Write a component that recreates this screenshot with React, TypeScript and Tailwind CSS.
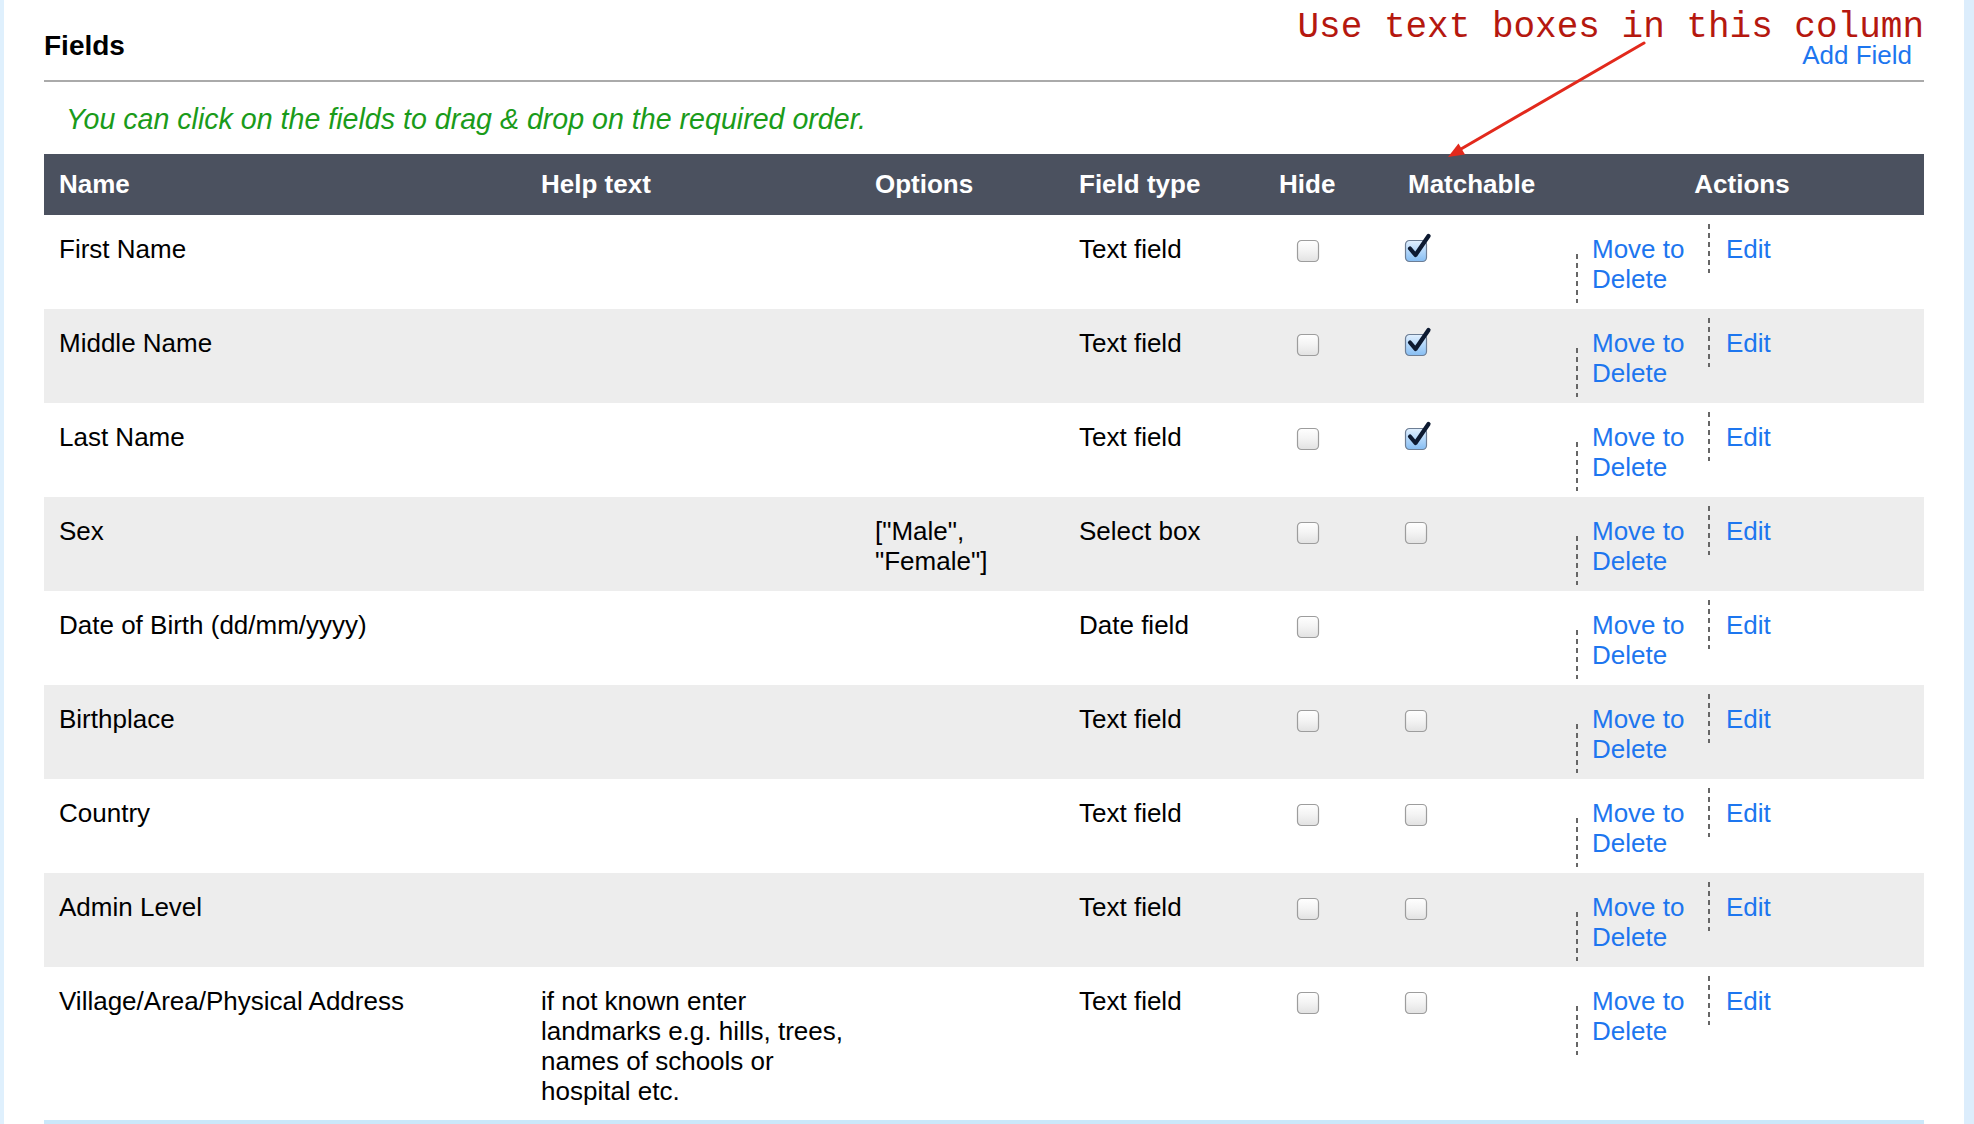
import React from "react";

type Row = {
  name: string;
  help?: string;
  options?: string;
  type: string;
  m: boolean | null;
};

const rows: Row[] = [
  { name: "First Name", type: "Text field", m: true },
  { name: "Middle Name", type: "Text field", m: true },
  { name: "Last Name", type: "Text field", m: true },
  { name: "Sex", options: '["Male", "Female"]', type: "Select box", m: false },
  { name: "Date of Birth (dd/mm/yyyy)", type: "Date field", m: null },
  { name: "Birthplace", type: "Text field", m: false },
  { name: "Country", type: "Text field", m: false },
  { name: "Admin Level", type: "Text field", m: false },
  {
    name: "Village/Area/Physical Address",
    help: "if not known enter landmarks e.g. hills, trees, names of schools or hospital etc.",
    type: "Text field",
    m: false,
  },
];

function Box({ checked }: { checked: boolean }) {
  return (
    <svg width="30" height="28" viewBox="0 -6 30 28" className="block overflow-visible">
      <rect
        x="0.5"
        y="0.5"
        width="21"
        height="21"
        rx="4"
        fill={checked ? "url(#gC)" : "url(#gU)"}
        stroke={checked ? "#6d7e95" : "#9d9d9d"}
        strokeWidth="1.2"
      />
      {checked && (
        <path
          d="M5 8.5 L10.5 15 L23.5 -4"
          fill="none"
          stroke="#0d1a31"
          strokeWidth="4.2"
          strokeLinecap="round"
          strokeLinejoin="round"
        />
      )}
    </svg>
  );
}

function Dash({ className }: { className: string }) {
  return (
    <span
      className={
        "block w-[2px] shrink-0 bg-[repeating-linear-gradient(to_bottom,#666666_0px,#666666_5px,transparent_5px,transparent_9px)] " +
        className
      }
    />
  );
}

export default function App() {
  return (
    <div className="relative w-[1974px] h-[1124px] overflow-hidden bg-white flex font-['Liberation_Sans',Arial,Helvetica,sans-serif] text-black">
      <svg width="0" height="0" className="absolute">
        <defs>
          <linearGradient id="gU" x1="0" y1="0" x2="0" y2="1">
            <stop offset="0" stopColor="#ffffff" />
            <stop offset="0.5" stopColor="#f3f3f3" />
            <stop offset="1" stopColor="#e2e2e2" />
          </linearGradient>
          <linearGradient id="gC" x1="0" y1="0" x2="0" y2="1">
            <stop offset="0" stopColor="#e2f0fe" />
            <stop offset="0.5" stopColor="#b3d7fa" />
            <stop offset="1" stopColor="#86bdf2" />
          </linearGradient>
        </defs>
      </svg>

      <div className="w-[4px] h-full bg-[#dff0fd] shrink-0" />

      <div className="ml-[40px] w-[1880px] shrink-0 flex flex-col">
        {/* Header */}
        <div className="h-[82px] border-b-2 border-[#aaaaaa] flex justify-between items-start">
          <div className="pt-[30px] text-[28px] leading-[32px] font-bold">Fields</div>
          <div className="flex flex-col items-end">
            <div className="pt-[14px] font-['Liberation_Mono','Courier_New',monospace] text-[36px] leading-[27px] text-[#b5180f] whitespace-nowrap">
              Use text boxes in this column
            </div>
            <a className="mr-[12px] mt-[1px] text-[26px] leading-[26px] text-[#1d76ef]">Add Field</a>
          </div>
        </div>

        <p className="pl-[22px] pt-[21px] pb-[19px] text-[28.6px] leading-[32px] italic text-[#1a9b1a]">
          You can click on the fields to drag &amp; drop on the required order.
        </p>

        {/* Table header */}
        <div className="grid grid-cols-[482px_334px_204px_200px_129px_167px_364px] h-[61px] pt-[15px] bg-[#4b515f] text-white font-bold text-[26px] leading-[30px]">
          <div className="pl-[15px]">Name</div>
          <div className="pl-[15px]">Help text</div>
          <div className="pl-[15px]">Options</div>
          <div className="pl-[15px]">Field type</div>
          <div className="pl-[15px]">Hide</div>
          <div className="pl-[15px]">Matchable</div>
          <div className="text-center">Actions</div>
        </div>

        {/* Rows */}
        {rows.map((r, i) => (
          <div
            key={r.name}
            className={
              "grid grid-cols-[482px_334px_204px_200px_129px_167px_364px] pt-[19px] text-[26px] leading-[30px] " +
              (i === rows.length - 1 ? "h-[153px] " : "h-[94px] ") +
              (i % 2 === 1 ? "bg-[#ededed]" : "bg-white")
            }
          >
            <div className="pl-[15px]">{r.name}</div>
            <div className="pl-[15px]">{r.help}</div>
            <div className="pl-[15px]">{r.options}</div>
            <div className="pl-[15px]">{r.type}</div>
            <div className="pl-[33px]">
              <Box checked={false} />
            </div>
            <div className="pl-[12px]">{r.m !== null && <Box checked={r.m} />}</div>
            <div className="flex items-start">
              <Dash className="ml-[16px] mt-[20px] h-[49px]" />
              <div className="ml-[14px] w-[116px] text-[#1d76ef]">
                <a className="block">Move to</a>
                <a className="block">Delete</a>
              </div>
              <Dash className="mt-[-10px] h-[49px]" />
              <a className="ml-[16px] text-[#1d76ef]">Edit</a>
            </div>
          </div>
        ))}

        <div className="h-[4px] bg-[#cbe8fa]" />
      </div>

      <div className="ml-[40px] w-[10px] h-full bg-[#dcedfc] shrink-0" />

      {/* Annotation arrow */}
      <svg
        className="absolute left-0 top-0 pointer-events-none"
        width="1974"
        height="1124"
        viewBox="0 0 1974 1124"
      >
        <line x1="1644" y1="43" x2="1461" y2="149" stroke="#e2291c" strokeWidth="3" strokeLinecap="round" />
        <polygon points="1448,157 1465,154.5 1458.5,143.5" fill="#e2291c" />
      </svg>
    </div>
  );
}
